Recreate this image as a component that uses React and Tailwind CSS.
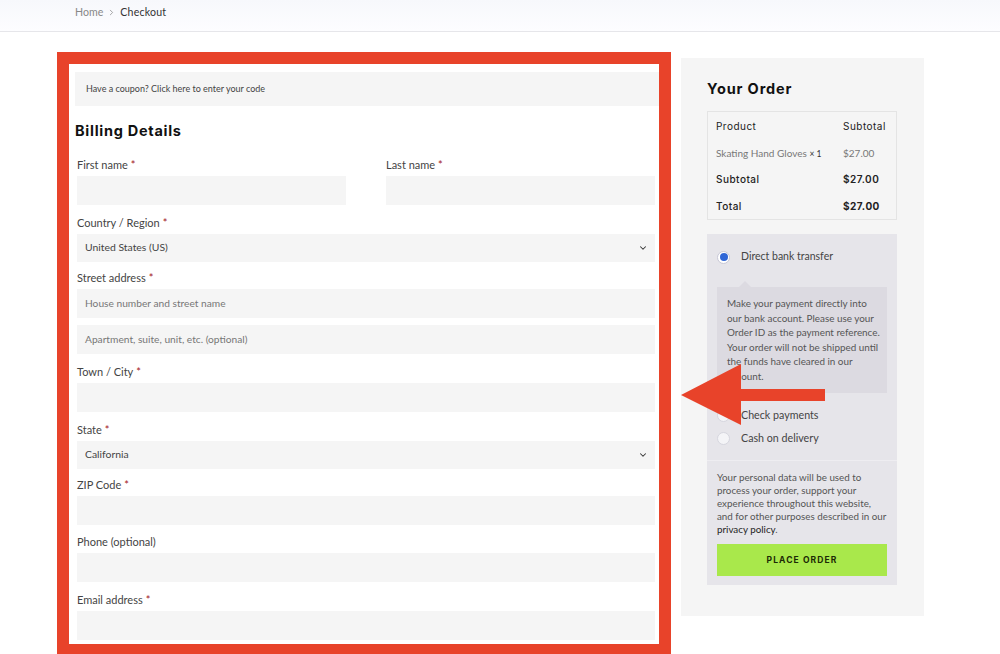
import { ChevronDown, ChevronRight } from 'lucide-react';

const body = { fontFamily: 'Lato, "Open Sans", sans-serif' };
const head = { fontFamily: 'Inter, "Open Sans", sans-serif' };

const bankLines = [
  'Make your payment directly into',
  'our bank account. Please use your',
  'Order ID as the payment reference.',
  'Your order will not be shipped until',
  'the funds have cleared in our',
  'account.',
];

const privacyLines = [
  'Your personal data will be used to',
  'process your order, support your',
  'experience throughout this website,',
  'and for other purposes described in our',
];

const Label = ({ text, required, className = '' }) => (
  <label className={`block text-[11px] leading-[14px] text-[#444] ${className}`}>
    {text}
    {required && <span className="text-[#a3161b] ml-[3px]">*</span>}
  </label>
);

const Input = ({ placeholder = '', className = '' }) => (
  <div className={`h-[29px] bg-[#f5f5f5] flex items-center px-[8px] text-[10.2px] text-[#777] ${className}`}>
    {placeholder}
  </div>
);

const Select = ({ value, className = '' }) => (
  <div className={`h-[28px] bg-[#f5f5f5] flex items-center justify-between pl-[8px] pr-[7px] text-[10.4px] text-[#444] ${className}`}>
    <span>{value}</span>
    <ChevronDown size={10} strokeWidth={2.5} className="text-[#333]" />
  </div>
);

const Radio = ({ checked }) =>
  checked ? (
    <span className="w-[13px] h-[13px] rounded-full bg-white border border-[#c7c7d6] flex items-center justify-center">
      <span className="w-[8px] h-[8px] rounded-full bg-[#2f66d6]" />
    </span>
  ) : (
    <span className="w-[13px] h-[13px] rounded-full bg-[#f4f4f7] border border-[#d6d6de]" />
  );

const App = () => {
  return (
    <div className="relative w-[1000px] h-[654px] overflow-hidden bg-white" style={body}>
      {/* breadcrumb bar */}
      <div className="h-[32px] border-b border-[#e6e6ea] bg-gradient-to-b from-[#f7f8fc] to-[#fdfdff] flex items-center pl-[75px] pb-[6px] text-[10.6px]">
        <span className="text-[#888]">Home</span>
        <ChevronRight size={9} strokeWidth={2} className="mx-[4px] text-[#888]" />
        <span className="text-[#333] tracking-[0.02em]">Checkout</span>
      </div>

      <div className="flex items-start pl-[57px] pt-[20px]">
        {/* billing form (highlighted) */}
        <div className="w-[614px] h-[604px] border-[12px] border-[#e8432a] bg-white pl-[6px] pt-[8px]">
          <div className="h-[34px] bg-[#f5f5f5] flex items-center pl-[11px] text-[9px] text-[#444]">
            Have a coupon? Click here to enter your code
          </div>
          <h2 className="mt-[16px] text-[14.5px] font-bold text-[#111] leading-[18px] tracking-[0.05em]" style={head}>
            Billing Details
          </h2>

          <div className="pl-[2px] pr-[4px] mt-[18px]">
            <div className="flex gap-[40px]">
              <div className="flex-1">
                <Label text="First name" required />
                <Input className="mt-[4px]" />
              </div>
              <div className="flex-1">
                <Label text="Last name" required />
                <Input className="mt-[4px]" />
              </div>
            </div>

            <Label text="Country / Region" required className="mt-[11px]" />
            <Select value="United States (US)" className="mt-[4px]" />

            <Label text="Street address" required className="mt-[9px]" />
            <Input placeholder="House number and street name" className="mt-[4px]" />
            <Input placeholder="Apartment, suite, unit, etc. (optional)" className="mt-[7px]" />

            <Label text="Town / City" required className="mt-[11px]" />
            <Input className="mt-[4px]" />

            <Label text="State" required className="mt-[11px]" />
            <Select value="California" className="mt-[4px]" />

            <Label text="ZIP Code" required className="mt-[9px]" />
            <Input className="mt-[4px]" />

            <Label text="Phone (optional)" className="mt-[10px]" />
            <Input className="mt-[4px]" />

            <Label text="Email address" required className="mt-[11px]" />
            <Input className="mt-[4px]" />
          </div>
        </div>

        {/* order summary */}
        <div className="ml-[10px] mt-[6px] w-[243px] h-[558px] bg-[#f5f5f5] pl-[26px] pr-[27px] pt-[22px]">
          <h2 className="text-[14.5px] font-bold text-[#111] leading-[18px] tracking-[0.06em]" style={head}>
            Your Order
          </h2>

          <div className="mt-[13px] border border-[#e4e4e4] px-[8px] pt-[7px] pb-[6px] tracking-[0.03em]" style={head}>
            <div className="flex h-[14px] items-center text-[10px] text-[#222]">
              <span className="flex-1">Product</span>
              <span className="w-[45px]">Subtotal</span>
            </div>
            <div className="flex h-[14px] mt-[13px] items-center text-[10px] text-[#777] tracking-normal" style={body}>
              <span className="flex-1">
                Skating Hand Gloves <span className="text-[#333] text-[8.5px]">× 1</span>
              </span>
              <span className="w-[45px]">$27.00</span>
            </div>
            <div className="flex h-[14px] mt-[12px] items-center text-[10px] font-medium text-[#222]">
              <span className="flex-1">Subtotal</span>
              <span className="w-[45px] font-semibold">$27.00</span>
            </div>
            <div className="flex h-[14px] mt-[13px] items-center text-[10px] font-medium text-[#222]">
              <span className="flex-1">Total</span>
              <span className="w-[45px] font-bold">$27.00</span>
            </div>
          </div>

          <div className="mt-[14px] h-[351px] bg-[#e6e5ea] text-[#444]">
            <div className="pl-[10px] pr-[10px] pt-[16px]">
              <div className="flex items-center h-[14px] text-[10.5px]">
                <Radio checked />
                <span className="ml-[11px] text-[#444]">Direct bank transfer</span>
              </div>

              <div className="relative mt-[23px] bg-[#dcdae1] h-[106px] pl-[10px] pr-[6px] pt-[9px] text-[9.9px] leading-[14.5px] text-[#555]">
                <span className="absolute -top-[6px] left-[22px] w-0 h-0 border-l-[6px] border-r-[6px] border-b-[6px] border-l-transparent border-r-transparent border-b-[#dcdae1]" />
                {bankLines.map((line) => (
                  <div key={line} className="whitespace-nowrap">{line}</div>
                ))}
              </div>

              <div className="flex items-center h-[14px] mt-[15px] text-[10.7px]">
                <Radio />
                <span className="ml-[11px]">Check payments</span>
              </div>
              <div className="flex items-center h-[14px] mt-[9px] text-[10.7px]">
                <Radio />
                <span className="ml-[11px]">Cash on delivery</span>
              </div>
            </div>

            <div className="mt-[15px] border-t border-[#eeedf1] px-[10px] pt-[10px]">
              <div className="text-[9.8px] leading-[13px] text-[#555]">
                {privacyLines.map((line) => (
                  <div key={line} className="whitespace-nowrap">{line}</div>
                ))}
                <div className="whitespace-nowrap">
                  <span className="text-[#222]">privacy policy</span>.
                </div>
              </div>
              <button
                className="mt-[8px] w-full h-[32px] bg-[#a9e84b] text-[8.5px] font-bold tracking-[0.13em] text-[#1c2a05]"
                style={head}
              >
                PLACE ORDER
              </button>
            </div>
          </div>
        </div>
      </div>

      {/* annotation arrow */}
      <svg className="absolute left-0 top-0 pointer-events-none" width="1000" height="654">
        <polygon points="681,395 741,364 741,389 825,389 825,401 741,401 741,425" fill="#e8432a" />
      </svg>
    </div>
  );
};

export default App;
